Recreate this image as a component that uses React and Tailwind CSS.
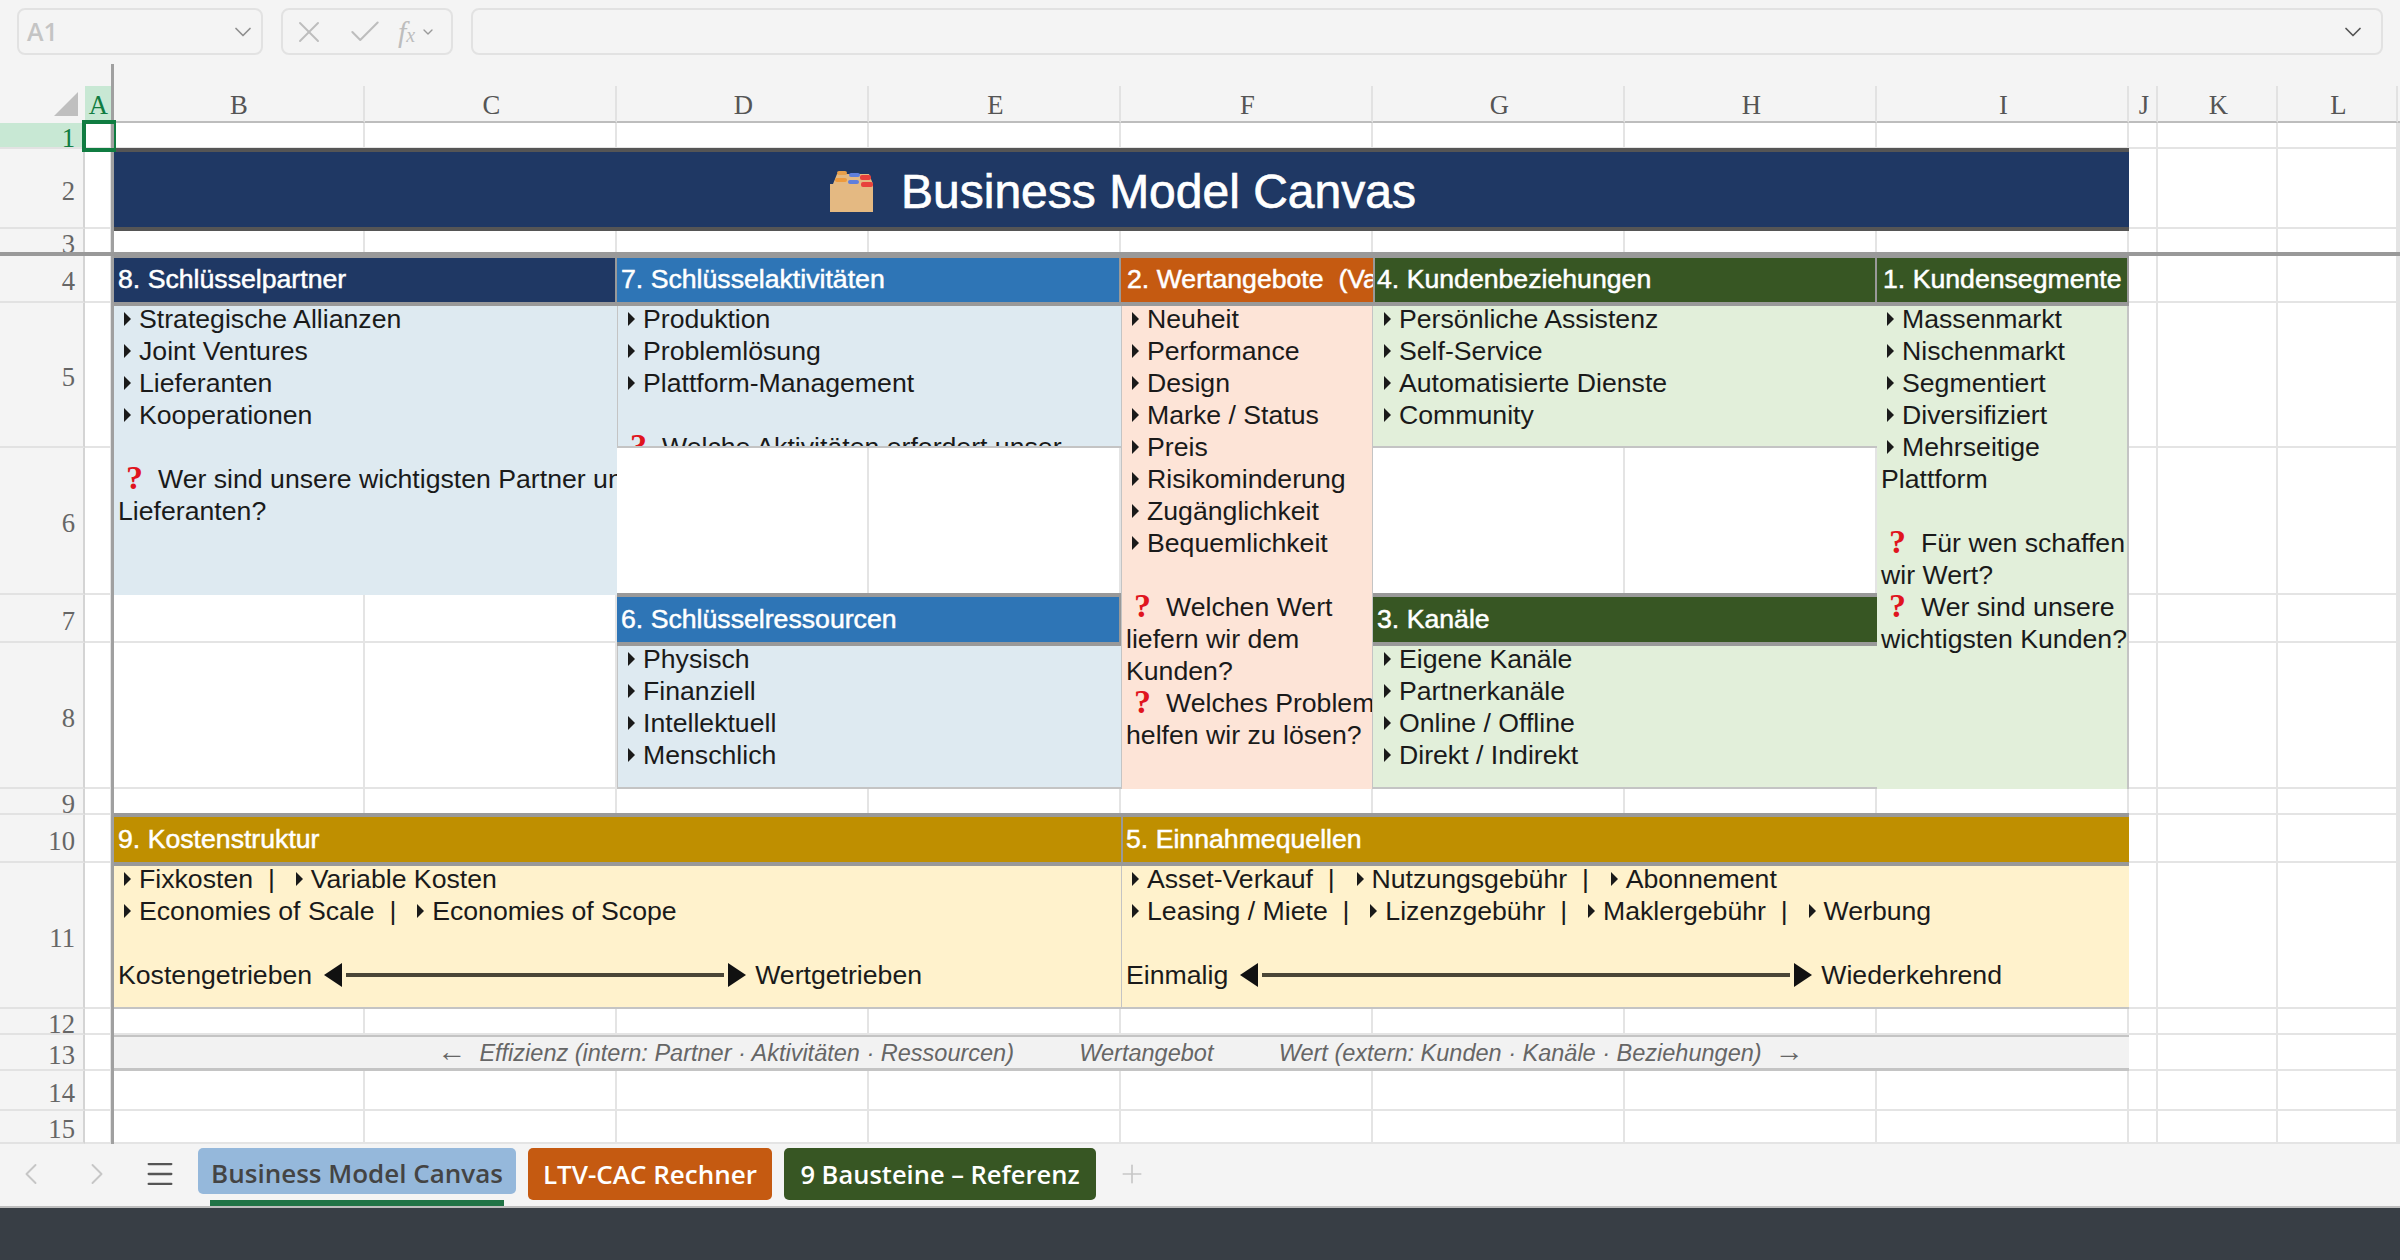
import React from "react";
import { X, Check, ChevronDown, ChevronLeft, ChevronRight, Menu, Plus } from "lucide-react";

const COLS = ["B", "C", "D", "E", "F", "G", "H", "I", "J", "K", "L"];

const ROW_HEADS = [
    { n: 1, cls: "row-start-2" },
    { n: 2, cls: "row-start-3" },
    { n: 3, cls: "row-start-4" },
    { n: 4, cls: "row-start-5" },
    { n: 5, cls: "row-start-6" },
    { n: 6, cls: "row-start-7" },
    { n: 7, cls: "row-start-8" },
    { n: 8, cls: "row-start-9" },
    { n: 9, cls: "row-start-10" },
    { n: 10, cls: "row-start-11" },
    { n: 11, cls: "row-start-12" },
    { n: 12, cls: "row-start-13" },
    { n: 13, cls: "row-start-14" },
    { n: 14, cls: "row-start-15" },
    { n: 15, cls: "row-start-16" },
];

// shared look of the coloured section headers
const HEAD =
    "relative z-10 -mt-[2px] -mb-[3px] flex items-center overflow-hidden whitespace-pre border-y-4 border-[#999999] pb-[2px] text-white [-webkit-text-stroke:0.5px_white]";

function Tri({ className = "" }) {
    return (
        <svg width="7" height="14" viewBox="0 0 7 14" className={`inline-block shrink-0 ${className}`}>
            <path d="M0 0 L7 7 L0 14 Z" fill="#1a1a1a" />
        </svg>
    );
}

function Item({ children }) {
    return (
        <div className="flex h-8 items-center whitespace-nowrap">
            <Tri className="ml-[6px] mr-[8px]" />
            {children}
        </div>
    );
}

function Line({ children }) {
    return <div className="flex h-8 items-center whitespace-pre">{children}</div>;
}

function Ask({ children }) {
    return (
        <div className="flex h-8 items-center whitespace-pre">
            <span className="ml-[8px] mr-[18px] w-[14px] -translate-y-[2px] text-center font-['Liberation_Serif',serif] text-[34px] font-bold text-[#e0141e]">
                ?
            </span>
            {children}
        </div>
    );
}

function Sep() {
    return <span className="whitespace-pre">{"  |  "}</span>;
}

function Spectrum({ width, className }) {
    return (
        <svg width={width} height="24" viewBox={`0 0 ${width} 24`} className={`shrink-0 ${className}`}>
            <path d="M0 12 L18 0 L18 24 Z" fill="#111111" />
            <rect x="22" y="10" width={width - 44} height="4" fill="#4a4636" />
            <path d={`M${width} 12 L${width - 18} 0 L${width - 18} 24 Z`} fill="#111111" />
        </svg>
    );
}

function CardBox() {
    return (
        <svg width="46" height="44" viewBox="0 0 46 44">
            <path d="M4 14 L8 4 L40 4 L44 14 L44 42 L1 42 L1 14 Z" fill="#e4b982" />
            <rect x="8" y="1" width="10" height="4" rx="2" fill="#e9a04a" />
            <rect x="6" y="8" width="12" height="4" rx="2" fill="#ee9a3c" />
            <rect x="20" y="3" width="11" height="4" rx="2" fill="#5f7fdc" />
            <rect x="19" y="10" width="11" height="4" rx="2" fill="#5f7fdc" />
            <rect x="31" y="5" width="11" height="5" rx="2" fill="#e8413c" />
            <rect x="32" y="12" width="12" height="5" rx="2" fill="#e8413c" />
        </svg>
    );
}

export default function App() {
    const empties = Array.from({ length: 131 });

    return (
        <div className="relative flex h-[1260px] w-[2400px] flex-col overflow-hidden bg-[#f4f4f4] font-['Liberation_Sans',Arial,sans-serif] text-[26.67px] text-[#1a1a1a]">
            {/* formula bar */}
            <div className="flex h-[86px] shrink-0 items-start pt-2">
                <div className="ml-[17px] flex h-[47px] w-[246px] items-center justify-between rounded-lg border-2 border-[#e2e2e2] pl-2 pr-1 font-['Open_Sans',sans-serif] text-[25px] font-semibold text-[#c4c4c4]">
                    A1
                    <ChevronDown size={28} strokeWidth={1.5} className="text-[#8f8f8f]" />
                </div>
                <div className="ml-[18px] flex h-[47px] w-[172px] items-center rounded-lg border-2 border-[#e2e2e2] text-[#bdbdbd]">
                    <X size={36} strokeWidth={1.3} className="ml-[8px]" />
                    <Check size={38} strokeWidth={1.3} className="ml-[19px]" />
                    <span className="ml-[14px] font-['Liberation_Serif',serif] text-[30px] italic">
                        f<span className="text-[20px]">x</span>
                    </span>
                    <ChevronDown size={16} strokeWidth={2} className="ml-[5px] text-[#9a9a9a]" />
                </div>
                <div className="ml-[18px] flex h-[47px] w-[1912px] items-center justify-end rounded-lg border-2 border-[#e2e2e2] pr-[14px]">
                    <ChevronDown size={28} strokeWidth={1.5} className="text-[#555555]" />
                </div>
            </div>

            {/* sheet */}
            <div className="grid h-[1058px] shrink-0 grid-cols-[85px_27px_253px_252px_252px_252px_252px_252px_252px_252px_29px_120px_120px_1fr] grid-rows-[37px_26px_80px_27px_47px_145px_147px_48px_146px_26px_48px_146px_26px_36px_40px_33px] overflow-hidden bg-white">
                {/* column heads */}
                <div className="col-start-1 row-start-1 flex items-end justify-end bg-[#f4f4f4] pb-[7px] pr-[7px]">
                    <svg width="24" height="24" viewBox="0 0 24 24">
                        <path d="M24 0 L24 24 L0 24 Z" fill="#bfbfbf" />
                    </svg>
                </div>
                <div className="col-start-2 row-start-1 flex items-center justify-center border-b-2 border-[#bdbdbd] bg-[#c8e8d4] pt-[2px] font-['Liberation_Serif',serif] text-[#107c41]">
                    A
                </div>
                {COLS.map((c) => (
                    <div
                        key={c}
                        className="row-start-1 flex items-center justify-center border-b-2 border-r-2 border-b-[#bdbdbd] border-r-[#e2e2e2] bg-[#f4f4f4] pl-[3px] pt-[2px] font-['Liberation_Serif',serif] text-[#555555]"
                    >
                        {c}
                    </div>
                ))}
                <div className="col-start-14 row-start-1 border-b-2 border-[#bdbdbd] bg-[#f4f4f4]" />

                {/* row heads */}
                {ROW_HEADS.map((r) => (
                    <div
                        key={r.n}
                        className={`col-start-1 flex items-center justify-end overflow-hidden border-b-2 border-r-2 border-b-[#e2e2e2] border-r-[#d4d4d4] pr-[8px] pt-[6px] font-['Liberation_Serif',serif] leading-none ${r.cls} ${
                            r.n === 1 ? "bg-[#c8e8d4] text-[#107c41]" : "bg-[#f4f4f4] text-[#666666]"
                        }`}
                    >
                        {r.n}
                    </div>
                ))}

                {/* title */}
                <div className="relative z-10 col-[3/11] row-start-3 -mt-px -mb-[2px] flex items-center justify-center gap-[26px] border-y-4 border-[#555555] bg-[#1f3864] pl-[4px] pt-[4px] text-[48px] leading-none text-white">
                    <CardBox />
                    <span className="[-webkit-text-stroke:0.7px_white]">Business Model Canvas</span>
                </div>

                {/* section heads */}
                <div className={`${HEAD} col-[3/5] row-start-5 border-r-2 bg-[#1f3864] pl-[6px]`}>8. Schlüsselpartner</div>
                <div className={`${HEAD} col-[5/7] row-start-5 border-r-2 bg-[#2e75b6] pl-[4px]`}>7. Schlüsselaktivitäten</div>
                <div className={`${HEAD} col-start-7 row-start-5 bg-[#c55a11] pl-[6px]`}>2. Wertangebote  (Value Proposition)</div>
                <div className={`${HEAD} col-[8/10] row-start-5 border-x-2 bg-[#375623] pl-[2px]`}>4. Kundenbeziehungen</div>
                <div className={`${HEAD} col-start-10 row-start-5 border-r-2 bg-[#375623] pl-[6px]`}>1. Kundensegmente</div>
                <div className={`${HEAD} col-[5/7] row-start-8 border-r-2 bg-[#2e75b6] pl-[4px]`}>6. Schlüsselressourcen</div>
                <div className={`${HEAD} col-[8/10] row-start-8 bg-[#375623] pl-[4px]`}>3. Kanäle</div>
                <div className={`${HEAD} col-[3/7] row-start-11 bg-[#bf8f00] pl-[6px]`}>9. Kostenstruktur</div>
                <div className={`${HEAD} col-[7/11] row-start-11 border-l-2 bg-[#bf8f00] pl-[3px]`}>5. Einnahmequellen</div>

                {/* 8 */}
                <div className="col-[3/5] row-[6/8] overflow-hidden bg-[#deeaf1] pl-[6px]">
                    <Item>Strategische Allianzen</Item>
                    <Item>Joint Ventures</Item>
                    <Item>Lieferanten</Item>
                    <Item>Kooperationen</Item>
                    <div className="h-8" />
                    <Ask>Wer sind unsere wichtigsten Partner und</Ask>
                    <Line>Lieferanten?</Line>
                </div>

                {/* 7 */}
                <div className="col-[5/7] row-start-6 overflow-hidden border-b-2 border-l border-[#c4c4c4] bg-[#deeaf1] pl-[4px]">
                    <Item>Produktion</Item>
                    <Item>Problemlösung</Item>
                    <Item>Plattform-Management</Item>
                    <div className="h-8" />
                    <Ask>Welche Aktivitäten erfordert unser</Ask>
                </div>

                {/* 2 */}
                <div className="col-start-7 row-[6/10] overflow-hidden border-x border-[#c4c4c4] bg-[#fde4d7] pl-[4px]">
                    <Item>Neuheit</Item>
                    <Item>Performance</Item>
                    <Item>Design</Item>
                    <Item>Marke / Status</Item>
                    <Item>Preis</Item>
                    <Item>Risikominderung</Item>
                    <Item>Zugänglichkeit</Item>
                    <Item>Bequemlichkeit</Item>
                    <div className="h-8" />
                    <Ask>Welchen Wert</Ask>
                    <Line>liefern wir dem</Line>
                    <Line>Kunden?</Line>
                    <Ask>Welches Problem</Ask>
                    <Line>helfen wir zu lösen?</Line>
                </div>

                {/* 4 */}
                <div className="col-[8/10] row-start-6 overflow-hidden border-b-2 border-[#c4c4c4] bg-[#e2efda] pl-[5px]">
                    <Item>Persönliche Assistenz</Item>
                    <Item>Self-Service</Item>
                    <Item>Automatisierte Dienste</Item>
                    <Item>Community</Item>
                </div>

                {/* 1 */}
                <div className="col-start-10 row-[6/10] overflow-hidden border-r-2 border-[#c4c4c4] bg-[#e2efda] pl-[4px]">
                    <Item>Massenmarkt</Item>
                    <Item>Nischenmarkt</Item>
                    <Item>Segmentiert</Item>
                    <Item>Diversifiziert</Item>
                    <Item>Mehrseitige</Item>
                    <Line>Plattform</Line>
                    <div className="h-8" />
                    <Ask>Für wen schaffen</Ask>
                    <Line>wir Wert?</Line>
                    <Ask>Wer sind unsere</Ask>
                    <Line>wichtigsten Kunden?</Line>
                </div>

                {/* 6 */}
                <div className="col-[5/7] row-start-9 overflow-hidden border-b-2 border-l border-[#c4c4c4] bg-[#deeaf1] pl-[4px]">
                    <Item>Physisch</Item>
                    <Item>Finanziell</Item>
                    <Item>Intellektuell</Item>
                    <Item>Menschlich</Item>
                </div>

                {/* 3 */}
                <div className="col-[8/10] row-start-9 overflow-hidden border-b-2 border-[#c4c4c4] bg-[#e2efda] pl-[5px]">
                    <Item>Eigene Kanäle</Item>
                    <Item>Partnerkanäle</Item>
                    <Item>Online / Offline</Item>
                    <Item>Direkt / Indirekt</Item>
                </div>

                {/* 9 */}
                <div className="col-[3/7] row-start-12 overflow-hidden border-b-2 border-[#c4c4c4] bg-[#fff2cc] pl-[6px]">
                    <Item>
                        Fixkosten
                        <Sep />
                        <Tri className="ml-[6px] mr-[8px]" />
                        Variable Kosten
                    </Item>
                    <Item>
                        Economies of Scale
                        <Sep />
                        <Tri className="ml-[6px] mr-[8px]" />
                        Economies of Scope
                    </Item>
                    <div className="h-8" />
                    <div className="flex h-8 items-center whitespace-nowrap">
                        Kostengetrieben
                        <Spectrum width={422} className="ml-[12px] mr-[9px]" />
                        Wertgetrieben
                    </div>
                </div>

                {/* 5 */}
                <div className="col-[7/11] row-start-12 overflow-hidden border-b-2 border-l border-[#c4c4c4] bg-[#fff2cc] pl-[4px]">
                    <Item>
                        Asset-Verkauf
                        <Sep />
                        <Tri className="ml-[7px] mr-[8px]" />
                        Nutzungsgebühr
                        <Sep />
                        <Tri className="ml-[7px] mr-[8px]" />
                        Abonnement
                    </Item>
                    <Item>
                        Leasing / Miete
                        <Sep />
                        <Tri className="ml-[6px] mr-[8px]" />
                        Lizenzgebühr
                        <Sep />
                        <Tri className="ml-[6px] mr-[8px]" />
                        Maklergebühr
                        <Sep />
                        <Tri className="ml-[6px] mr-[8px]" />
                        Werbung
                    </Item>
                    <div className="h-8" />
                    <div className="flex h-8 items-center whitespace-nowrap">
                        Einmalig
                        <Spectrum width={572} className="ml-[12px] mr-[9px]" />
                        Wiederkehrend
                    </div>
                </div>

                {/* axis note */}
                <div className="col-[3/11] row-start-14 -mt-px flex items-center justify-center whitespace-pre border-y-[3px] border-[#c4c4c4] bg-[#f2f2f2] pt-[2px] text-[23.5px] italic text-[#666666]">
                    <span className="-translate-y-[2px] text-[29px] leading-none">←</span>
                    {"  Effizienz (intern: Partner · Aktivitäten · Ressourcen)          Wertangebot          Wert (extern: Kunden · Kanäle · Beziehungen)  "}
                    <span className="-translate-y-[2px] text-[29px] leading-none">→</span>
                </div>

                {/* plain cells fill whatever the blocks above leave free */}
                {empties.map((_, i) => (
                    <div key={i} className="border-b-2 border-r-2 border-[#e4e4e4] bg-white" />
                ))}
            </div>

            {/* sheet tabs */}
            <div className="flex h-[64px] shrink-0 items-start border-b-2 border-[#bdbdbd] bg-[#f4f4f4] pt-1 font-['Open_Sans',sans-serif] text-[26px] font-semibold">
                <ChevronLeft size={36} strokeWidth={1.3} className="ml-[13px] mt-2 text-[#c6c6c6]" />
                <ChevronRight size={36} strokeWidth={1.3} className="ml-[30px] mt-2 text-[#c6c6c6]" />
                <Menu size={34} strokeWidth={1.6} className="ml-[28px] mt-[9px] text-[#555555]" />
                <div className="ml-[21px] flex h-[58px] w-[318px] flex-col">
                    <div className="flex h-[48px] items-center justify-center rounded-[5px] bg-[#95b8db] pt-1 text-[#444444]">
                        Business Model Canvas
                    </div>
                    <div className="mx-3 mt-1.5 h-1.5 bg-[#217346]" />
                </div>
                <div className="ml-3 flex h-[52px] w-[244px] items-center justify-center rounded-[5px] bg-[#c55a11] text-white">
                    LTV-CAC Rechner
                </div>
                <div className="ml-3 flex h-[52px] w-[312px] items-center justify-center rounded-[5px] bg-[#375623] text-[25.5px] text-white">
                    9 Bausteine – Referenz
                </div>
                <Plus size={30} strokeWidth={1.3} className="ml-[21px] mt-[11px] text-[#c6c6c6]" />
            </div>

            <div className="flex-1 bg-[#383e45]" />

            {/* frozen pane lines and the selected cell lie over the sheet */}
            <div className="absolute left-[111px] top-[64px] z-20 h-[1080px] w-[3px] bg-[#a0a0a0]" />
            <div className="absolute left-0 top-[252px] z-20 h-1 w-full bg-[#999999]" />
            <div className="absolute left-[82px] top-[120px] z-30 h-[32px] w-[34px] border-[4px] border-r-2 border-[#107c41] bg-transparent" />
        </div>
    );
}
